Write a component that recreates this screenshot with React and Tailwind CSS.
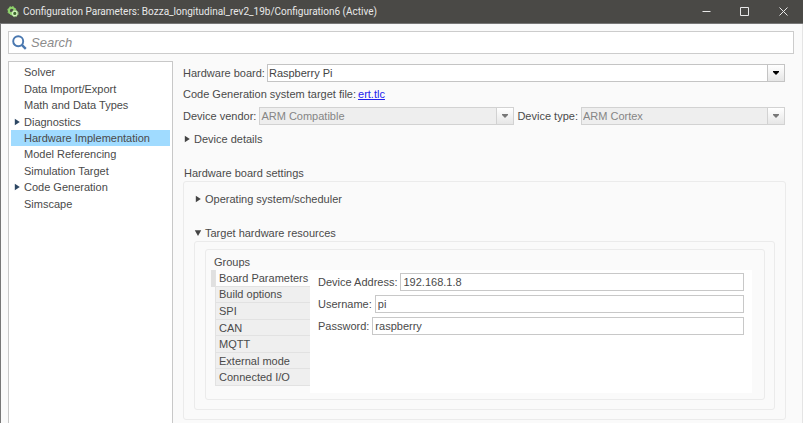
import React from "react";

const treeItems = [
  { label: "Solver" },
  { label: "Data Import/Export" },
  { label: "Math and Data Types" },
  { label: "Diagnostics", expandable: true },
  { label: "Hardware Implementation", active: true },
  { label: "Model Referencing" },
  { label: "Simulation Target" },
  { label: "Code Generation", expandable: true },
  { label: "Simscape" },
];

const groups = [
  "Board Parameters",
  "Build options",
  "SPI",
  "CAN",
  "MQTT",
  "External mode",
  "Connected I/O",
];

const fields = [
  { id: "device-address", label: "Device Address:", value: "192.168.1.8" },
  { id: "username", label: "Username:", value: "pi" },
  { id: "password", label: "Password:", value: "raspberry" },
];

function Arrow({ open, className = "text-[#444]" }) {
  return (
    <svg viewBox="0 0 8 8" className={`h-2 w-2 shrink-0 ${className}`} aria-hidden="true">
      <path d={open ? "M0.8 1.2H7.2L4 7Z" : "M1.8 0.8L6.8 4L1.8 7.2Z"} fill="currentColor" />
    </svg>
  );
}

function GearLogo() {
  return (
    <svg viewBox="0 0 12 12" className="h-3 w-3 shrink-0" aria-hidden="true">
      <circle cx="4.8" cy="4.6" r="2.9" fill="none" stroke="#8ed36b" strokeWidth="2" />
      <circle cx="4.8" cy="4.6" r="4.1" fill="none" stroke="#8ed36b" strokeWidth="1" strokeDasharray="1.6 1.62" />
      <circle cx="7.8" cy="7.4" r="2.3" fill="#3f6a2d" stroke="#d4f3c0" strokeWidth="1.4" />
      <circle cx="7.8" cy="7.4" r="3.3" fill="none" stroke="#a9e389" strokeWidth="1" strokeDasharray="1.5 1.09" />
    </svg>
  );
}

function Dropdown({ id, value, disabled, className }) {
  return (
    <div className={`relative h-[18px] min-w-0 ${className}`}>
      <select
        id={id}
        disabled={disabled}
        defaultValue={value}
        className="block h-full w-full appearance-none border border-[#c4c4c4] bg-white pr-5 pl-px leading-4 text-[#444] opacity-100 disabled:border-[#d2d2d2] disabled:bg-[#eeeeee] disabled:text-[#858585]"
      >
        <option>{value}</option>
      </select>
      <span
        className={`pointer-events-none absolute inset-y-0 right-0 flex w-[18px] items-center justify-center border bg-linear-to-b from-white to-[#e6e6e6] ${
          disabled ? "border-[#d2d2d2] text-[#777]" : "border-[#c4c4c4] text-black"
        }`}
      >
        <svg viewBox="0 0 6 4" className="h-1 w-1.5" aria-hidden="true">
          <path d="M0 0H6V1L3 4L0 1Z" fill="currentColor" />
        </svg>
      </span>
    </div>
  );
}

export default function App() {
  return (
    <div className="flex h-screen flex-col overflow-hidden bg-[#fafafa] font-['Liberation_Sans',Arial,sans-serif] text-[11px] leading-4 text-[#4a4a4a]">
      <header className="flex h-6 shrink-0 items-center border-b border-[#777] bg-[#4a4946] pl-[7px] text-[#e8e8e8]">
        <GearLogo />
        <h1 className="ml-1 flex-1 truncate font-[Roboto,sans-serif] text-[10px]">
          Configuration Parameters: Bozza_longitudinal_rev2_19b/Configuration6 (Active)
        </h1>
        <button type="button" aria-label="Minimize" className="flex h-full w-[38px] items-center justify-center">
          <svg viewBox="0 0 9 9" className="h-[9px] w-[9px]" fill="none" stroke="currentColor">
            <path d="M0.5 4.5H8.5" />
          </svg>
        </button>
        <button type="button" aria-label="Maximize" className="flex h-full w-[38px] items-center justify-center">
          <svg viewBox="0 0 9 9" className="h-[9px] w-[9px]" fill="none" stroke="currentColor">
            <path d="M0.5 0.5H8.5V8.5H0.5Z" />
          </svg>
        </button>
        <button type="button" aria-label="Close" className="flex h-full w-10 items-center justify-center">
          <svg viewBox="0 0 9 9" className="h-[9px] w-[9px]" fill="none" stroke="currentColor">
            <path d="M0.5 0.5L8.5 8.5M8.5 0.5L0.5 8.5" />
          </svg>
        </button>
      </header>

      <div className="flex min-h-0 flex-1 flex-col border-r border-l border-r-[#e4e4e4] border-l-[#777] pt-[7px] pr-2 pl-[7px]">
        <label className="flex h-[23px] shrink-0 items-center border border-[#cccccc] bg-white pl-[3px]">
          <svg viewBox="0 0 15 15" className="h-[15px] w-[15px] shrink-0" fill="none" stroke="#4a78b0" aria-hidden="true">
            <circle cx="6.2" cy="6.2" r="5" strokeWidth="1.9" />
            <path d="M9.8 9.8L13.8 13.8" strokeWidth="2.4" />
          </svg>
          <input
            type="search"
            aria-label="Search"
            placeholder="Search"
            className="ml-1 h-full min-w-0 flex-1 text-[13px] italic outline-none placeholder:text-[#8c8c8c]"
          />
        </label>

        <div className="mt-[7px] flex min-h-0 flex-1">
          <nav className="w-[165px] shrink-0 border border-b-0 border-[#c8c8c8] bg-white px-0.5 pt-0.5">
            <ul className="grid h-[148px] grid-rows-9">
              {treeItems.map((item) => (
                <li key={item.label} className="flex min-h-0">
                  <button
                    type="button"
                    className={`flex w-full items-center gap-[3px] pl-0.5 text-left ${item.active ? "bg-[#a0dbff]" : ""}`}
                  >
                    {item.expandable ? <Arrow className="text-[#2d4763]" /> : <span className="w-2" />}
                    {item.label}
                  </button>
                </li>
              ))}
            </ul>
          </nav>

          <main className="flex min-w-0 flex-1 flex-col pt-[3px] pl-2.5">
            <div className="flex items-center gap-0.5 pr-[9px]">
              <label htmlFor="board">Hardware board:</label>
              <Dropdown id="board" value="Raspberry Pi" className="flex-1" />
            </div>
            <p className="mt-1">
              Code Generation system target file:
              <a href="#ert" className="ml-0.5 text-[#2222ee] underline">ert.tlc</a>
            </p>
            <div className="mt-[5px] flex items-center gap-[3px] pr-[9px]">
              <label htmlFor="vendor">Device vendor:</label>
              <Dropdown id="vendor" value="ARM Compatible" disabled className="flex-5" />
              <label htmlFor="type">Device type:</label>
              <Dropdown id="type" value="ARM Cortex" disabled className="flex-4" />
            </div>
            <button type="button" aria-expanded="false" className="mt-1.5 flex items-center gap-[3px] self-start">
              <Arrow />
              Device details
            </button>

            <h2 className="mt-[18px] pl-px">Hardware board settings</h2>
            <section className="mr-2 flex flex-col rounded-[3px] border border-[#ebebeb] px-2.5 pt-[9px] pb-[9px]">
              <button type="button" aria-expanded="false" className="flex items-center gap-[3px] self-start">
                <Arrow />
                Operating system/scheduler
              </button>
              <button type="button" aria-expanded="true" className="mt-[18px] flex items-center gap-[3px] self-start">
                <Arrow open />
                Target hardware resources
              </button>
              <div className="rounded-[3px] border border-[#ebebeb] px-2.5 pt-[7px] pb-[9px] pr-[9px]">
                <div className="rounded-[3px] border border-[#ebebeb] pt-1 pr-3 pb-1.5 pl-[5px]">
                  <h3 className="pl-[3px]">Groups</h3>
                  <div className="flex items-start">
                    <div role="tablist" aria-label="Groups" className="grid h-[116px] w-[99px] shrink-0 grid-rows-7">
                      {groups.map((name, i) => (
                        <button
                          key={name}
                          type="button"
                          role="tab"
                          aria-selected={i === 0}
                          className={`flex min-h-0 items-center border-l-4 text-left ${
                            i === 0 ? "border-[#e0e0e0]" : "border-transparent"
                          }`}
                        >
                          <span
                            className={`flex h-full w-full items-center border-b border-l border-[#e2e2e2] pl-[3px] whitespace-nowrap ${
                              i === 0 ? "bg-[#fdfdfd]" : "bg-[#efefef]"
                            }`}
                          >
                            {name}
                          </span>
                        </button>
                      ))}
                    </div>
                    <div className="flex h-[123px] min-w-0 flex-1 flex-col gap-1 bg-white pt-[3px] pr-2 pl-2">
                      {fields.map((field) => (
                        <div key={field.id} className="flex items-center gap-[3px]">
                          <label htmlFor={field.id}>{field.label}</label>
                          <input
                            id={field.id}
                            type="text"
                            defaultValue={field.value}
                            className="h-[18px] min-w-0 flex-1 border border-[#c8c8c8] bg-white px-0.5 outline-none"
                          />
                        </div>
                      ))}
                    </div>
                  </div>
                </div>
              </div>
            </section>
          </main>
        </div>
      </div>
    </div>
  );
}
